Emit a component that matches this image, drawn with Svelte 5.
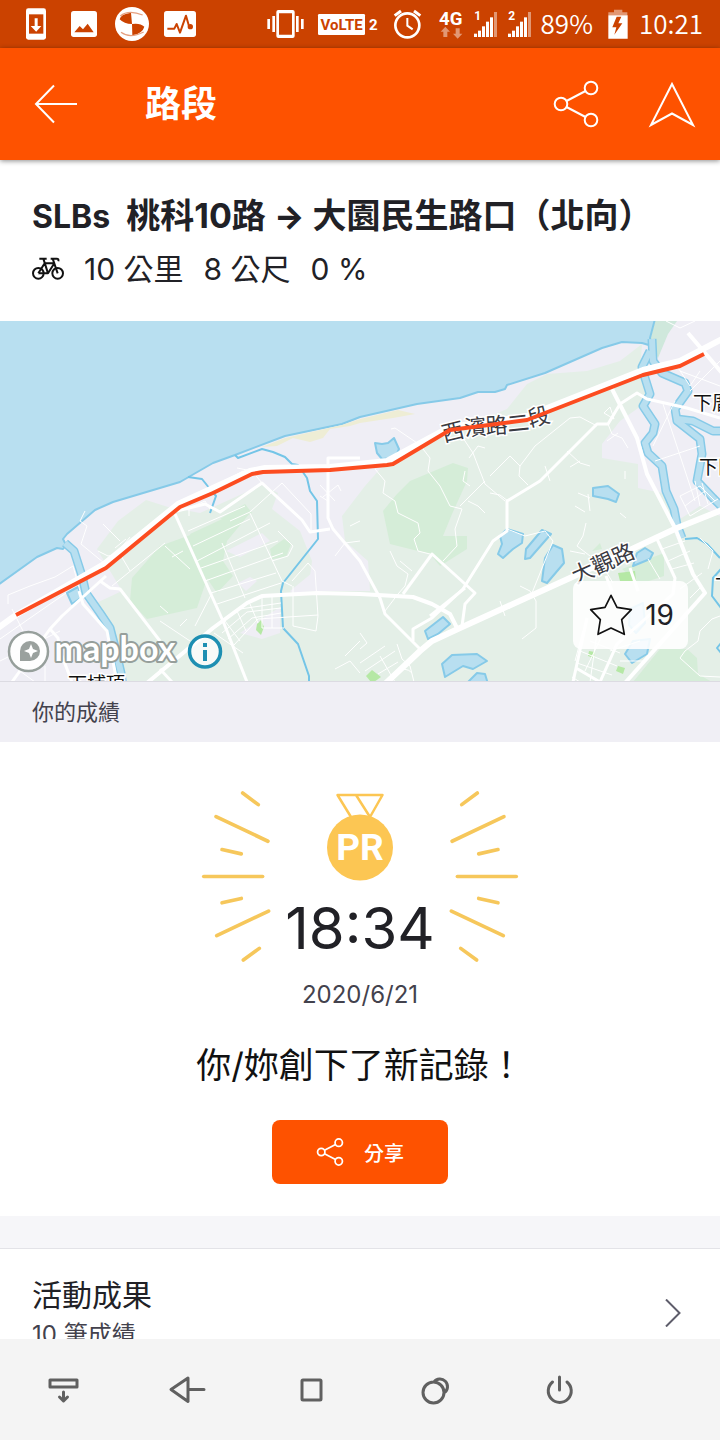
<script>
  const stats = ['10 公里', '8 公尺', '0 %'];

  const rays = [
    'M158 69 205 104',
    'M78 140 234 214',
    'M96 239 154 252',
    'M41 320H218',
    'M96 399 154 386',
    'M80 498 236 424',
    'M160 571 208 536',
  ];

  const bars = [
    [0, 101], [12, 92], [24, 79], [36, 65], [48, 52], [60, 36],
  ];

  const fields = [
    'M160 545 193 533 213 560 197 607 147 618 130 600 132 577Z',
    'M190 533 233 513 250 512 227 540 223 560 233 575 217 592 200 567Z',
    'M220 518 245 503 252 512 235 520Z',
    'M270 548 284 538 291 543 286 556 272 558Z',
    'M453 462 468 467 467 480 452 513 443 535 467 535V548L440 565 430 553 390 543 383 510 397 493 410 480Z',
    'M660 648H687L697 657 698 673 712 681H633Z',
    'M622 568 664 552V575L640 583Z',
    'M592 550 600 542 602 548Z',
  ];

  const parks = [
    'M366 675 372 669 381 676 374 681H371Z',
    'M618 572 635 570 636 580H620Z',
    'M589 650 595 651 594 657 588 655Z',
    'M618 665 625 667 623 673 616 670Z',
    'M257 623 261 619 264 626 261 634 256 629Z',
  ];

  const ponds = [
    'M375 442 382 443 388 442 394 437 399 448 395 457 382 458 377 452Z',
    'M593 487 608 485 619 493 616 501 608 498 593 495Z',
    'M500 535 507 528 523 533 522 542 513 548 503 557 498 553 502 543Z',
    'M526 548 542 529 551 533 530 557 525 558Z',
    'M553 544 562 548 564 562 547 582 542 580 545 557Z',
    'M425 630 443 616 450 623 438 633 428 638Z',
    'M442 663 452 654 477 653 487 660 473 668 463 665 445 676Z',
    'M466 683 477 672 485 673 488 683Z',
    'M633 565 637 552 645 547 653 552 650 558Z',
    'M625 653 633 640 650 638 647 653 632 662Z',
    'M630 608 643 602 645 622 636 632 629 624Z',
    'M67 592 78 586 82 596 72 603Z',
  ];

  const rivers = [
    'M65 542 74 550 82 575 86 592 100 612 110 627 116 650 121 672 123 685',
    'M650 350 642 366 645 377 650 393 643 405 655 423 653 432 645 442 648 452 662 465 666 490 674 508 677 524 682 537',
    'M652 338 653 360 662 372 685 382 688 390 675 408 677 420 700 438 702 453 697 480 713 497 722 506',
    'M677 418 693 420 713 430 722 430',
  ];

  const streams = [
    'M188 476 202 478 210 488 216 495 210 512',
    'M235 454 238 457 262 448 273 451 285 456 292 463 298 464 307 477 310 490 317 500 318 538 283 582 281 590 283 627 298 643 309 675V682',
    'M685 538 697 537 707 543 720 557',
    'M721 568 713 577 712 595 721 607',
    'M721 642 717 647 721 652',
  ];

  const lanes = [
    'M8 603V594L30 585 55 576 73 565 80 590', 'M0 638 66 592', 'M85 510 80 520 87 525 81 543 104 562', 'M12 608 23 630',
    'M103 523 120 540M115 547 126 538M120 548 130 536', 'M98 550 108 555 120 553 130 570',
    'M112 585 165 542 M165 545 190 568 M172 556 183 550 M195 625 212 592 M180 625 187 618',
    'M188 530 245 505 M193 545 250 518 M197 560 270 522 M201 567 278 540 M205 580 283 552 M211 592 276 572 M217 603 281 582',
    'M222 542 245 597 M250 512 282 580 292 585 M278 530 293 545 288 555 272 560',
    'M189 515V507L205 500 210 508 M230 520 250 511 282 482 311 513V530 M262 482 252 470 237 467M228 478 243 470',
    'M216 625 240 608 281 602 M222 632 247 611 281 607 M228 638 252 617 281 612 M234 644 258 618 318 614 M214 632 243 652 M225 620 240 640 M237 610 246 630 M250 603 258 622 M262 597V627H284 M272 595V627',
    'M292 580 308 562 315 570 318 615 316 630 293 625V585',
    'M320 484 335 500 M323 496 338 484 341 490 M328 500 320 495',
    'M350 525 360 520M335 555 345 542 360 540',
    'M375 468 385 480 383 492 395 500 398 512 418 522 420 532 414 538 418 550 430 553',
    'M391 428 395 427 420 444 430 457 428 470 440 485 450 505 462 508 455 528 457 545 443 560',
    'M463 437 473 452 485 483 505 500 M469 457 478 445 485 447 M470 485 463 480 465 470 M490 475 510 455 520 465 519 475 528 484 M520 465 535 445 570 417 580 416 597 425',
    'M485 480 460 505M468 500 478 505 485 512M490 492 500 494 508 500 M545 465 550 480 M567 450 580 462 590 465M570 466 580 460',
    'M608 423 612 433 622 437 628 447M618 432 607 440 M604 412 610 406 614 418Z',
    'M590 510 588 493M578 492 590 497 M585 511 575 505 M625 470V478 M620 512 626 517',
    'M653 445 675 400 M655 460 700 445 M662 400 695 500 M675 362 690 385 700 370 M690 390 720 360 M680 370 720 385',
    'M680 495 700 485 715 500 M685 505 705 490 M690 515 718 498 M695 480 700 505 M702 482 708 503 M680 495 690 515',
    'M507 528 525 535 545 530 553 540 532 592 M520 585 530 590 536 600V627L522 638 M500 600 505 615M495 610 510 607',
    'M586 522 583 535 577 545 590 555M570 550 585 553',
    'M390 550 397 565 408 573 405 585 398 593 385 610',
    'M360 662 385 645 M365 670 395 650 M360 632 367 642 360 648 M380 655 395 681 M397 643 402 658 410 665 414 681M378 673 398 661 M395 671Q406 665 412 672',
    'M345 655 360 640 M335 668 350 660 360 672',
    'M607 572 613 582M648 558 660 578 M668 560 690 550 M680 588 702 572 M690 597 700 587M662 548 685 540 M672 568 694 562',
    'M583 630 575 660M598 625 590 681M608 622 585 670M580 650 617 665M577 662 612 674M590 640 620 652M610 650 640 640M620 660 645 660M572 676 580 681',
    'M720 615 712 618 700 630 698 640 685 650 680 657 700 675 720 676 M700 537 713 550 708 568',
    'M160 620 190 640M168 612 160 605 M0 660 30 645 60 630M45 665V681M20 670 35 681',
    'M412 570 400 560 M666 320 680 327 695 320',
  ];

  const streets = [
    'M147 682 213 627 247 602 262 595 317 592 360 593 413 596 432 603 450 613 458 629',
    'M612 388 637 437 647 473 675 527 693 573 705 592 625 682',
    'M688 332 722 372',
  ];

  const minorStreets = [
    'M175 513 223 620 247 681',
    'M100 580 110 587 120 588 160 640M160 668 172 681',
    'M12 681 50 628 62 615 106 575M50 628 58 637 60 650 72 681',
    'M79 590 83 603 107 630 117 681',
    'M360 457H328V517L333 528 360 560 380 597 385 613 420 648',
    'M177 510 205 503 220 511 262 482 302 519 310 531 330 528',
    'M720 417 687 407 647 398 637 392 620 403 608 423H597L540 480 507 500V530L493 540 463 588 432 617 413 628V640',
    'M403 593 432 553 475 592 465 603 462 625M465 587 430 615',
    'M657 538 675 577 673 593 617 643 600 681',
    'M630 567 638 590M587 617 573 681M576 667 600 681M606 575 612 590',
  ];

  const navItems = [
    { label: '收起', icon: 'M50 1380H77V1387H50ZM63.500 1392V1400M59.500 1397 63.500 1401 67.500 1397' },
    { label: '返回', icon: 'M188 1378 171 1389.500 188 1401.500ZM188 1389.500H204' },
    { label: '主畫面', icon: 'M303 1380H320Q321 1380 321 1381V1399Q321 1400 320 1400H303Q302 1400 302 1399V1381Q302 1380 303 1380Z' },
    { label: '最近使用', icon: 'M444 1392.500A10.500 10.500 0 1 1 423 1392.500 10.500 10.500 0 1 1 444 1392.500M434 1382A7.500 7.500 0 1 1 444.500 1392.500' },
    { label: '電源', icon: 'M559.500 1377V1390M552.500 1382A11.500 11.500 0 1 0 567 1382' },
  ];
</script>

{#snippet shareIcon(size, stroke)}
  <svg width={size} height={size} viewBox="0 0 48 48" fill="none" stroke="#fff" stroke-width={stroke} aria-hidden="true">
    <circle cx="9" cy="24" r="6.300" />
    <circle cx="39" cy="8" r="6.300" />
    <circle cx="39" cy="40" r="6.300" />
    <path d="M14.500 21 33.500 11M14.500 27 33.500 37" />
  </svg>
{/snippet}

{#snippet signal(number)}
  <svg width="26" height="32" viewBox="0 24 78 96" fill="#fff" aria-hidden="true">
    <text x="4" y="60" class="sim">{number}</text>
    {#each bars as [x, top], i}
      <rect x={x + 3} y={top} width="9" height={111 - top} opacity={i === 5 ? 0.45 : 1} />
    {/each}
  </svg>
{/snippet}

{#snippet rayBurst(mirrored)}
  <svg class="rays" class:mirrored width="70" height="173" viewBox="33 60 210 520" aria-hidden="true">
    {#each rays as d}
      <path {d} />
    {/each}
  </svg>
{/snippet}

<div class="screen">
  <div class="status">
    <div class="status-left">
      <svg width="32" height="32" viewBox="60 24 96 96" aria-hidden="true">
        <rect x="78" y="25" width="60" height="94" rx="7" fill="#fff" />
        <path d="M87 43h43v58H87z" fill="#cb4200" />
        <path d="M104 55h9v23h11L108.500 95 92 78h12z" fill="#fff" />
      </svg>
      <svg width="32" height="32" viewBox="204 24 96 96" aria-hidden="true">
        <rect x="213" y="33" width="78" height="78" rx="8" fill="#fff" />
        <path d="M223 97 239 78 249 88 263 71 281 97z" fill="#cb4200" />
      </svg>
      <svg class="spill" width="32" height="32" viewBox="348 24 96 96" aria-hidden="true">
        <circle cx="396" cy="72" r="51" fill="#fff" />
        <path d="M396 72Q372 72 359 58 362 42 393 38ZM396 72Q420 68 433 80 428 100 397 106Z" fill="#cb4200" />
        <path d="M361 48Q385 28 428 45M363 97Q390 117 431 96" fill="none" stroke="#e5a080" stroke-width="4" />
      </svg>
      <svg width="32" height="32" viewBox="492 24 96 96" aria-hidden="true">
        <rect x="492" y="33" width="96" height="78" rx="8" fill="#fff" />
        <path d="M502 86H523L530 72 540 98 558 47 568 82" fill="none" stroke="#cb4200" stroke-width="6" stroke-linejoin="round" />
        <circle cx="571" cy="80" r="8" fill="#cb4200" />
      </svg>
    </div>
    <div class="status-right">
      <svg width="42" height="32" viewBox="798 24 126 96" fill="#fff" aria-hidden="true">
        <path d="M838 30H881Q887 30 887 36V108Q887 114 881 114H838Q832 114 832 108V36Q832 30 838 30ZM840 40V104H879V40Z" fill-rule="evenodd" />
        <path d="M820 48h8v48h-8zM891 48h8v48h-8zM805 57h8v30h-8zM906 57h8v30h-8z" />
      </svg>
      <svg width="68" height="32" viewBox="948 24 204 96" aria-hidden="true">
        <rect x="957" y="42" width="141" height="63" rx="4" fill="#fff" />
        <text x="1028" y="90" class="volte">VoLTE</text>
        <text x="1110" y="90" class="volte-sim">2</text>
      </svg>
      <svg width="38" height="32" viewBox="96 24 114 96" fill="none" stroke="#fff" aria-hidden="true">
        <circle cx="145" cy="76" r="36" stroke-width="8" />
        <path d="M145 54V77L161 88" stroke-width="6" />
        <path d="M107 47 126 33M184 47 165 33" stroke-width="9" />
      </svg>
      <svg width="28" height="32" viewBox="234 24 84 96" aria-hidden="true">
        <text x="275" y="74" class="network">4G</text>
        <path d="M259 80 273 95H265V111H253V95H245ZM296 116 282 101H290V85H302V101H310Z" fill="#fff" opacity=".45" />
      </svg>
      {@render signal('1')}
      {@render signal('2')}
      <span>89%</span>
      <svg width="30" height="32" viewBox="723 24 90 96" fill="#fff" aria-hidden="true">
        <path d="M762 29h25v8h15v9h-57v-9h17z" opacity=".45" />
        <path d="M745 46H803V116H745ZM770 50 757 82H769L763 104 787 70H775L784 50Z" fill-rule="evenodd" />
      </svg>
      <span>10:21</span>
    </div>
  </div>

  <header>
    <button class="icon-button" aria-label="返回">
      <svg width="44" height="40" viewBox="0 0 44 40" fill="none" stroke="#fff" stroke-width="2" aria-hidden="true">
        <path d="M20 1.500 2 20 20 38.500M2 20H43" />
      </svg>
    </button>
    <h1>路段</h1>
    <button class="icon-button" aria-label="分享路段">{@render shareIcon(48, 2)}</button>
    <button class="icon-button" aria-label="導航">
      <svg width="48" height="48" viewBox="0 0 48 48" fill="none" stroke="#fff" stroke-width="2" aria-hidden="true">
        <path d="M24 4 45 45 24 33.500 3 45Z" />
      </svg>
    </button>
  </header>

  <main>
    <section class="summary">
      <h2><span class="latin">SLBs</span>&nbsp; 桃科10路&nbsp;<span class="latin arrow">→</span>&nbsp;大園民生路口（北向）</h2>
      <div class="stats">
        <svg width="32" height="24" viewBox="96 232 96 72" fill="none" stroke="#111" stroke-width="6" stroke-linejoin="round" aria-hidden="true">
          <circle cx="115" cy="281" r="16" />
          <circle cx="173" cy="281" r="16" />
          <path d="M118 237H140M130 237 144 281M115 281 134 251H163L144 281H115M152 237H170Q177 237 175 245M158 237 173 281" />
        </svg>
        {#each stats as stat}
          <span>{stat}</span>
        {/each}
      </div>
    </section>

    <div class="map">
      <svg class="tiles" viewBox="0 320 720 360" preserveAspectRatio="xMidYMid slice" role="img" aria-label="路段地圖">
        <rect y="320" width="720" height="361" fill="#efeef5" />
        <path
          fill="#e4efe7"
          d="M97 548 118 520 146 499 168 506 200 512 262 484 278 492 272 508 300 530 312 560 308 590H370L368 560 345 540 342 515 365 485 380 468 450 432 507 408 527 383 547 373 587 370 620 360 642 343 640 372 648 400 620 420 602 443V457L638 463V487L662 492 677 520 700 505 720 515V681H128L110 640 100 620 92 604 122 590Z"
        />
        <path fill="#efeef5" d="M226 550 262 532 270 540 240 556ZM238 582 250 576 257 580 246 590ZM240 632 280 606V632L262 638ZM290 590 312 572 316 590 292 592Z" />
        {#each fields as d}<path {d} fill="#d5edd8" />{/each}
        {#each parks as d}<path {d} fill="#b5e8a5" />{/each}
        <path fill="#cfe8dc" d="M655 320H677L668 333 658 357 650 340Z" />
        <path
          class="water"
          d="M655 318 650 337 652 345 642 342 622 341 602 347 545 372 507 384 505 388 495 391H478L460 397 417 403 360 416 342 423 285 435 235 454 213 462 180 481 113 501 95 509 67 533 63 538 66 544 63 548 57 547 37 556-2 584V318Z"
        />
        <path fill="#eeedd5" d="M237 455 262 446 285 437 342 424 360 418 398 409 415 413 393 417 360 422 350 425 330 428 323 437 310 441 293 437 277 445 262 446Z" />
        {#each rivers as d}<path {d} class="river-edge" />{/each}
        {#each rivers as d}<path {d} class="river" />{/each}
        {#each ponds as d}<path {d} class="water" />{/each}
        {#each streams as d}<path {d} class="stream" />{/each}
        {#each lanes as d}<path {d} class="road lane" />{/each}
        {#each minorStreets as d}<path {d} class="road minor" />{/each}
        {#each streets as d}<path {d} class="road street" />{/each}
        <path class="road avenue" d="M722 509 677 527 570 577 460 627 432 640 420 650 385 683" />
        <path class="road avenue" d="M-2 627 16 614 104 563 178 503 250 470 265 467 330 466 387 460 450 426 527 415 643 369 680 360 722 338" />

        <g class="place">
          <text class="street-name" x="444 465 486 508 530" y="441 435 433 431 426" rotate="-14 -5 -3 -6 -14">西濱路二段</text>
          <text class="street-name" transform="translate(576 583) rotate(-24)">大觀路</text>
          <text x="693" y="409">下厝</text>
          <text x="699" y="473">下田</text>
          <text x="715" y="592">下</text>
          <text x="68" y="690">下埔頂</text>
        </g>

        <path class="route" d="M16 614 106 567 180 506 213 492 252 473 263 471 330 469 387 464 393 463 450 429 527 419 643 374 680 365 704 353" />

        <circle cx="28.500" cy="650.500" r="19.500" fill="#fff" fill-opacity=".9" stroke="#969f9b" stroke-width="2.500" />
        <path d="M20 660V650A10 10 0 1 1 30 660Z" fill="#9aa19e" />
        <path d="M31 643 33 648 38 650 33 652 31 657 29 652 24 650 29 648Z" fill="#fff" />
        <text class="wordmark" x="115" y="660">mapbox</text>
        <circle cx="205" cy="650.500" r="15.500" fill="#fff" fill-opacity=".7" stroke="#1d8fb2" stroke-width="3.500" />
        <path d="M203 642H207V646H203ZM203 649H207V660H203Z" fill="#1d8fb2" />
      </svg>
      <button class="star">
        <svg width="44" height="44" viewBox="685 248 132 132" fill="none" stroke="#111" stroke-width="5" stroke-linejoin="round" aria-hidden="true">
          <path d="M751 255 769 291 812 298 783 328 791 372 751 353 712 372 719 328 690 298 733 291Z" />
        </svg>
        19
      </button>
    </div>

    <h3>你的成績</h3>

    <section class="result">
      <div class="hero">
        {@render rayBurst(false)}
        <div class="record">
          <svg width="66" height="89" viewBox="0 0 66 89" aria-hidden="true">
            <path d="M24 25 10.500 3H55.500L43 25 29 3" fill="none" stroke="#fcc653" stroke-width="2.500" stroke-linejoin="round" />
            <circle cx="33" cy="55.500" r="33" fill="#fcc653" />
            <text x="33" y="68" class="pr">PR</text>
          </svg>
          <time class="elapsed">18:34</time>
        </div>
        {@render rayBurst(true)}
      </div>
      <time class="date">2020/6/21</time>
      <p>你/妳創下了新記錄！</p>
      <button class="share">{@render shareIcon(28, 3)}分享</button>
    </section>

    <a class="efforts" href="#efforts">
      <span class="efforts-text">
        <span class="efforts-title">活動成果</span>
        <span class="efforts-count">10 筆成績</span>
      </span>
      <svg width="16" height="28" viewBox="0 0 16 28" fill="none" stroke="#5e5d6b" stroke-width="2" aria-hidden="true">
        <path d="M1 .500 14.500 14 1 27.500" />
      </svg>
    </a>
  </main>

  <nav>
    {#each navItems as item, i}
      <button aria-label={item.label}>
        <svg width="40" height="40" viewBox="{43 + i * 124} 1370 40 40" aria-hidden="true">
          <path d={item.icon} />
        </svg>
      </button>
    {/each}
  </nav>
</div>

<style>
  :global(body) {
    margin: 0;
  }

  .screen {
    display: flex;
    flex-direction: column;
    height: 100vh;
    overflow: hidden;
    background: #fff;
    color: #212126;
    font-family: Inter, 'Noto Sans CJK TC', sans-serif;
  }

  button {
    display: flex;
    align-items: center;
    justify-content: center;
    margin: 0;
    padding: 0;
    border: 0;
    background: none;
    color: inherit;
    font-family: inherit;
  }

  svg {
    display: block;
    flex: none;
  }

  .status {
    display: flex;
    flex: none;
    align-items: center;
    justify-content: space-between;
    height: 48px;
    padding: 0 17px 0 20px;
    background: #cb4200;
    color: #fff;
    font-family: 'Noto Sans CJK TC', sans-serif;
    font-size: 26px;
    line-height: 32px;
  }

  .status-left,
  .status-right {
    display: flex;
    align-items: center;
  }

  .status-left {
    gap: 16px;
  }

  .status-right {
    gap: 8px;
  }

  .status-right span {
    padding-bottom: 2px;
    font-weight: 350;
  }

  .spill {
    overflow: visible;
  }

  .volte,
  .volte-sim,
  .network,
  .sim {
    fill: #fff;
    font-family: Roboto, sans-serif;
    font-weight: 700;
  }

  .volte {
    fill: #cb4200;
    font-size: 45px;
    text-anchor: middle;
  }

  .volte-sim {
    font-size: 45px;
  }

  .network {
    font-size: 56px;
    text-anchor: middle;
  }

  .sim {
    font-size: 36px;
  }

  header {
    display: flex;
    z-index: 1;
    flex: none;
    align-items: center;
    gap: 48px;
    height: 112px;
    padding: 0 24px 0 34px;
    background: #fe5200;
    box-shadow: 0 1px 5px rgba(0, 0, 0, 0.45);
    color: #fff;
  }

  h1 {
    flex: 1;
    margin: 0;
    padding-left: 19px;
    font-size: 36px;
    font-weight: 700;
    line-height: 48px;
  }

  main {
    flex: 1;
    min-height: 0;
    overflow: hidden;
  }

  .summary {
    padding: 32px;
  }

  h2 {
    margin: 0;
    font-size: 34px;
    font-weight: 700;
    line-height: 48px;
    white-space: nowrap;
  }

  .latin {
    font-size: 32px;
  }

  .arrow {
    font-weight: 800;
  }

  .stats {
    display: flex;
    align-items: center;
    gap: 20px;
    margin-top: 8px;
    font-size: 30px;
    line-height: 40px;
  }

  .map {
    position: relative;
    height: 360px;
  }

  .tiles {
    width: 100%;
    height: 100%;
  }

  .water {
    fill: #b8dff0;
    stroke: #86cae8;
    stroke-width: 2;
    stroke-linejoin: round;
  }

  .river-edge,
  .river,
  .stream,
  .road,
  .route {
    fill: none;
    stroke-linejoin: round;
  }

  .river-edge {
    stroke: #86cae8;
    stroke-width: 9;
  }

  .river {
    stroke: #b8dff0;
    stroke-width: 6;
  }

  .stream {
    stroke: #74c5e7;
    stroke-width: 2;
  }

  .road {
    stroke: #fff;
  }

  .lane {
    stroke-width: 1;
  }

  .minor {
    stroke-width: 3;
  }

  .street {
    stroke-width: 4;
  }

  .avenue {
    stroke-width: 6;
  }

  .route {
    stroke: #fc4c20;
    stroke-width: 4;
  }

  .place text {
    fill: #111;
    stroke: #fff;
    stroke-width: 3;
    paint-order: stroke;
    font-family: 'Noto Sans CJK TC', sans-serif;
    font-size: 19px;
  }

  .place .street-name {
    fill: #3a3a42;
    font-size: 22px;
  }

  .wordmark {
    fill: #fff;
    stroke: #969f9b;
    stroke-width: 4;
    stroke-linejoin: round;
    paint-order: stroke;
    font-family: Lato, sans-serif;
    font-size: 34px;
    font-weight: 700;
    text-anchor: middle;
  }

  .star {
    position: absolute;
    right: 32px;
    bottom: 32px;
    gap: 12px;
    height: 68px;
    padding: 0 14px 0 16px;
    border-radius: 8px;
    background: rgba(255, 255, 255, 0.88);
    font-size: 28px;
  }

  h3 {
    margin: 0;
    padding: 0 32px;
    border-top: 1px solid #dcdbe2;
    background: #f0eff5;
    color: #43424d;
    font-size: 22px;
    font-weight: 400;
    line-height: 60px;
  }

  .result {
    display: flex;
    flex-direction: column;
    align-items: center;
    padding: 48px 32px 32px;
  }

  .hero {
    display: flex;
    gap: 14px;
  }

  .rays {
    fill: none;
    stroke: #f6c75b;
    stroke-width: 11;
    stroke-linecap: round;
  }

  .mirrored {
    transform: scaleX(-1);
  }

  .record {
    display: flex;
    flex-direction: column;
    align-items: center;
    padding-top: 2px;
  }

  .pr {
    fill: #fff;
    font-family: Roboto, sans-serif;
    font-size: 37px;
    font-weight: 700;
    text-anchor: middle;
  }

  .elapsed {
    margin-top: 15px;
    font-size: 58px;
    line-height: 64px;
  }

  .date {
    margin-top: 16px;
    color: #43424d;
    font-size: 24px;
    line-height: 32px;
  }

  p {
    margin: 30px 0 31px;
    color: #111;
    font-size: 35px;
    line-height: 48px;
  }

  .share {
    gap: 20px;
    height: 64px;
    padding: 0 44px;
    border-radius: 8px;
    background: #fe5200;
    color: #fff;
    font-size: 20px;
    font-weight: 500;
  }

  .efforts {
    display: flex;
    align-items: center;
    justify-content: space-between;
    height: 130px;
    padding: 0 39px 0 32px;
    border-top: 32px solid #f6f6f9;
    box-shadow: inset 0 1px #e3e3e8;
    color: #212126;
    text-decoration: none;
  }

  .efforts-text {
    display: flex;
    flex-direction: column;
    gap: 4px;
  }

  .efforts-title {
    font-size: 30px;
    line-height: 40px;
  }

  .efforts-count {
    color: #43424d;
    font-size: 24px;
    line-height: 32px;
  }

  nav {
    display: flex;
    flex: none;
    height: 101px;
    padding: 0 99px 0 1px;
    background: #f4f4f4;
  }

  nav button {
    flex: 1;
  }

  nav path {
    fill: none;
    stroke: #606060;
    stroke-width: 3;
    stroke-linejoin: round;
    stroke-linecap: round;
  }
</style>
